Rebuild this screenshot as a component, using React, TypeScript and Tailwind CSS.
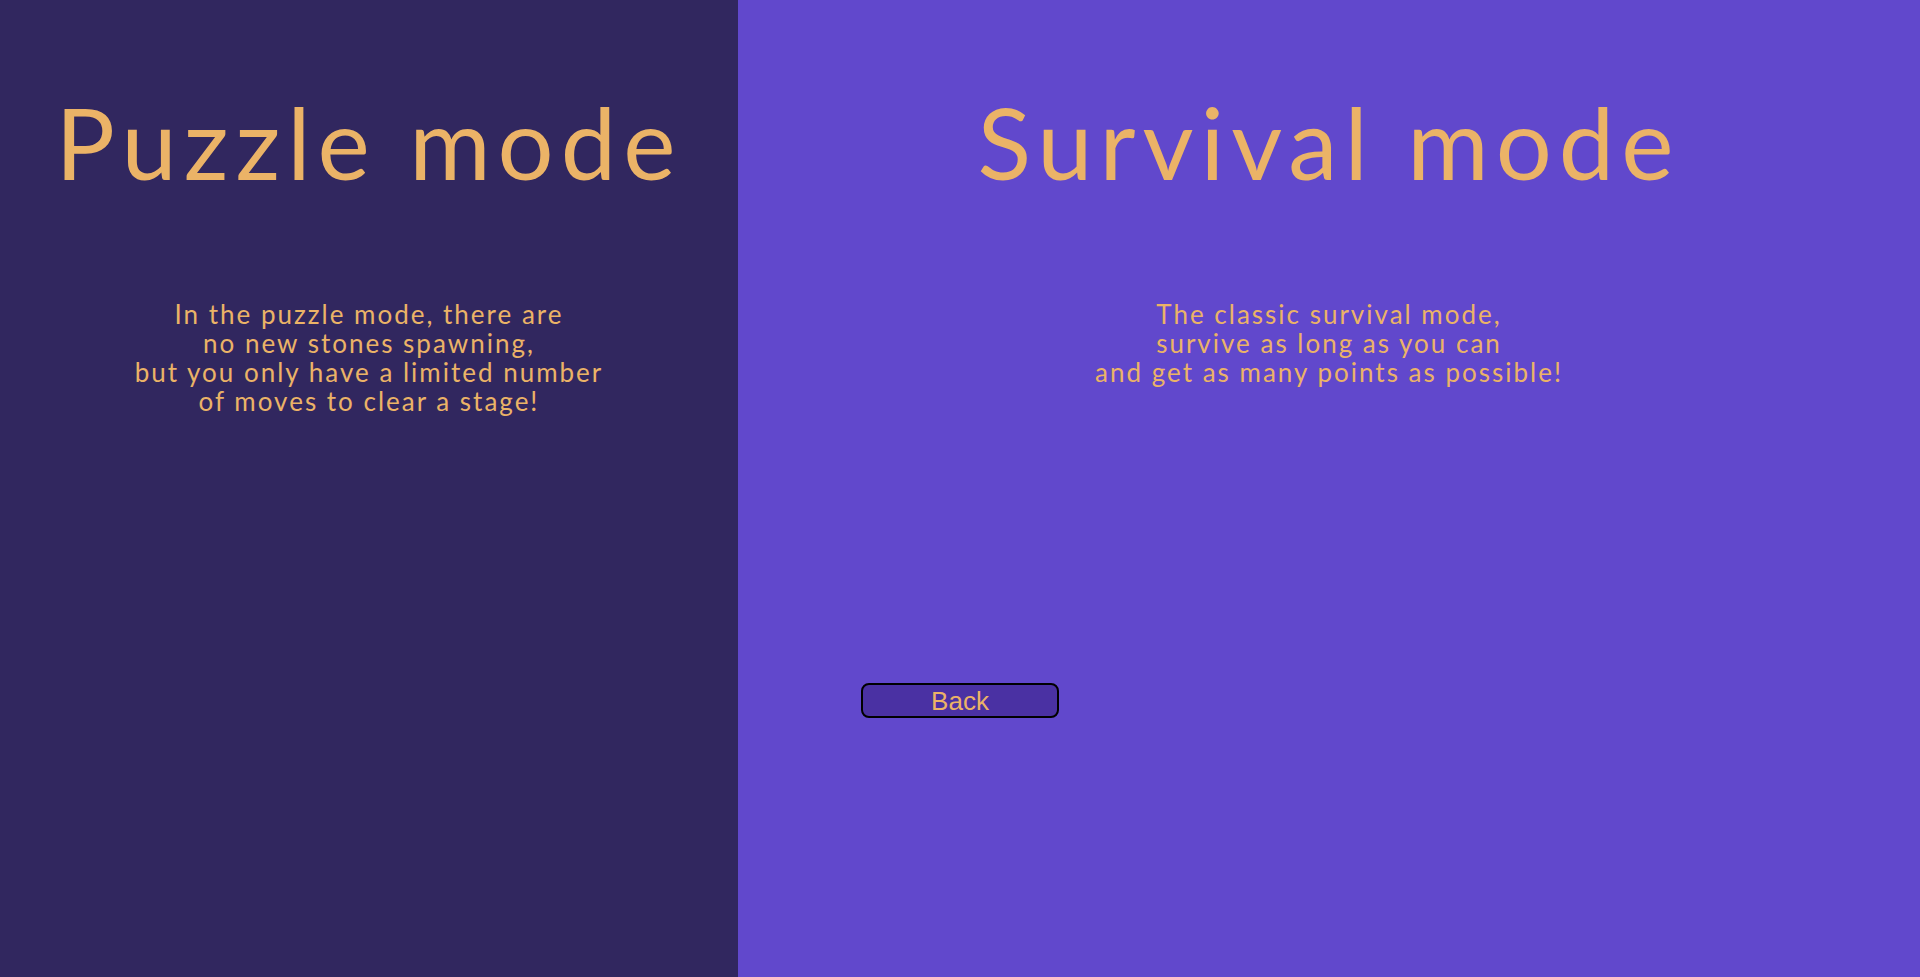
import { ReactNode } from "react"

const modes = [
  {
    title: "Puzzle mode",
    lines: [
      "In the puzzle mode, there are",
      "no new stones spawning,",
      "but you only have a limited number",
      "of moves to clear a stage!",
    ],
  },
  {
    title: "Survival mode",
    lines: [
      "The classic survival mode,",
      "survive as long as you can",
      "and get as many points as possible!",
    ],
  },
]

function ModePanel({
  title,
  lines,
  className,
  children,
}: {
  title: string
  lines: string[]
  className: string
  children?: ReactNode
}) {
  return (
    <section className={`flex h-full flex-col items-center ${className}`}>
      <h1 className="mt-[86px] text-[99px] leading-[112px] font-normal tracking-[7px] text-[#ebb367]">
        {title}
      </h1>
      <div className="mt-[102px] text-center text-[26px] leading-[29px] tracking-[2px] text-[#ebb367]">
        {lines.map((line) => (
          <p key={line}>{line}</p>
        ))}
      </div>
      {children}
    </section>
  )
}

export default function App() {
  return (
    <div className="flex h-screen w-full overflow-hidden font-['Lato',sans-serif]">
      <ModePanel {...modes[0]} className="w-[738px] shrink-0 bg-[#31275f]" />
      <ModePanel {...modes[1]} className="flex-1 bg-[#6148cc]">
        <button className="mt-[296px] ml-[123px] h-[35px] w-[198px] self-start rounded-[8px] border-2 border-black bg-[#4a31a3] font-['Liberation_Sans',Arial,sans-serif] text-[26px] leading-none text-[#ebb367]">
          Back
        </button>
      </ModePanel>
    </div>
  )
}
